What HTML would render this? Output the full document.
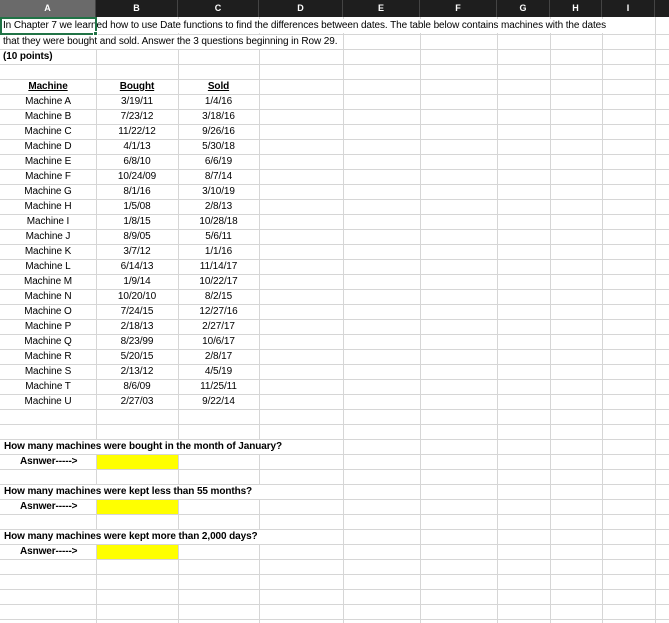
<!DOCTYPE html>
<html><head><meta charset="utf-8"><style>
*{margin:0;padding:0;box-sizing:border-box}
body{width:669px;height:623px;overflow:hidden;background:#fff;position:relative;font-family:"Liberation Sans",Arial,sans-serif;font-size:10px;color:#000}
.v{position:absolute;top:17px;bottom:0;width:1px;background:#d6d6d6}
.h{position:absolute;left:0;right:0;height:1px;background:#d6d6d6}
.hdr{position:absolute;top:0;left:0;right:0;height:17px;background:#1e1e1e}
.hc{position:absolute;top:0;height:17px;line-height:17px;text-align:center;color:#fff;font-size:9px;font-weight:bold;border-right:1px solid #444}
.t{position:absolute;height:14px;line-height:14px;white-space:nowrap;letter-spacing:-0.1px}
.w{background:#fff}
.c{text-align:center}
.b{font-weight:bold}
.u{text-decoration:underline}
.y{position:absolute;left:97px;width:81px;height:14px;background:#ffff00}
</style></head><body>
<div class="hdr">
<div class="hc" style="left:0;width:96px;background:#6a6a6a">A</div>
<div class="hc" style="left:96px;width:82px">B</div>
<div class="hc" style="left:178px;width:81px">C</div>
<div class="hc" style="left:259px;width:84px">D</div>
<div class="hc" style="left:343px;width:77px">E</div>
<div class="hc" style="left:420px;width:77px">F</div>
<div class="hc" style="left:497px;width:53px">G</div>
<div class="hc" style="left:550px;width:52px">H</div>
<div class="hc" style="left:602px;width:53px">I</div>
</div>
<div class="v" style="left:96px"></div><div class="v" style="left:178px"></div><div class="v" style="left:259px"></div><div class="v" style="left:343px"></div><div class="v" style="left:420px"></div><div class="v" style="left:497px"></div><div class="v" style="left:550px"></div><div class="v" style="left:602px"></div><div class="v" style="left:655px"></div>
<div class="h" style="top:34px"></div>
<script>
for(var y=49;y<623;y+=15){document.write('<div class="h" style="top:'+y+'px"></div>');}
</script>
<div class="t w" style="left:1px;top:19px;width:653px;padding-left:2px">In Chapter 7 we learned how to use Date functions to find the differences between dates. The table below contains machines with the dates</div>
<div style="position:absolute;left:0;top:17px;width:97px;height:18px;border:2px solid #217346"></div>
<div style="position:absolute;left:93px;top:31px;width:5px;height:5px;background:#217346;border:1px solid #fff"></div>
<div class="t w" style="left:1px;top:35px;width:341px;padding-left:2px">that they were bought and sold. Answer the 3 questions beginning in Row 29.</div>
<div class="t w b" style="left:1px;top:50px;width:94px;padding-left:2px">(10 points)</div>
<div class="t c b u" style="left:0;top:80px;width:96px">Machine</div>
<div class="t c b u" style="left:96px;top:80px;width:82px">Bought</div>
<div class="t c b u" style="left:178px;top:80px;width:81px">Sold</div>
<script>
var d=[["A","3/19/11","1/4/16"],["B","7/23/12","3/18/16"],["C","11/22/12","9/26/16"],["D","4/1/13","5/30/18"],["E","6/8/10","6/6/19"],["F","10/24/09","8/7/14"],["G","8/1/16","3/10/19"],["H","1/5/08","2/8/13"],["I","1/8/15","10/28/18"],["J","8/9/05","5/6/11"],["K","3/7/12","1/1/16"],["L","6/14/13","11/14/17"],["M","1/9/14","10/22/17"],["N","10/20/10","8/2/15"],["O","7/24/15","12/27/16"],["P","2/18/13","2/27/17"],["Q","8/23/99","10/6/17"],["R","5/20/15","2/8/17"],["S","2/13/12","4/5/19"],["T","8/6/09","11/25/11"],["U","2/27/03","9/22/14"]];
for(var i=0;i<d.length;i++){var y=95+i*15;
document.write('<div class="t c" style="left:0;top:'+y+'px;width:96px">Machine '+d[i][0]+'</div><div class="t c" style="left:96px;top:'+y+'px;width:82px">'+d[i][1]+'</div><div class="t c" style="left:178px;top:'+y+'px;width:81px">'+d[i][2]+'</div>');}
</script>
<div class="t w b" style="left:1px;top:440px;width:341px;padding-left:3px">How many machines were bought in the month of January?</div>
<div class="t b" style="left:20px;top:455px">Asnwer-----&gt;</div>
<div class="y" style="top:455px"></div>
<div class="t w b" style="left:1px;top:485px;width:341px;padding-left:3px">How many machines were kept less than 55 months?</div>
<div class="t b" style="left:20px;top:500px">Asnwer-----&gt;</div>
<div class="y" style="top:500px"></div>
<div class="t w b" style="left:1px;top:530px;width:341px;padding-left:3px">How many machines were kept more than 2,000 days?</div>
<div class="t b" style="left:20px;top:545px">Asnwer-----&gt;</div>
<div class="y" style="top:545px"></div>
</body></html>
